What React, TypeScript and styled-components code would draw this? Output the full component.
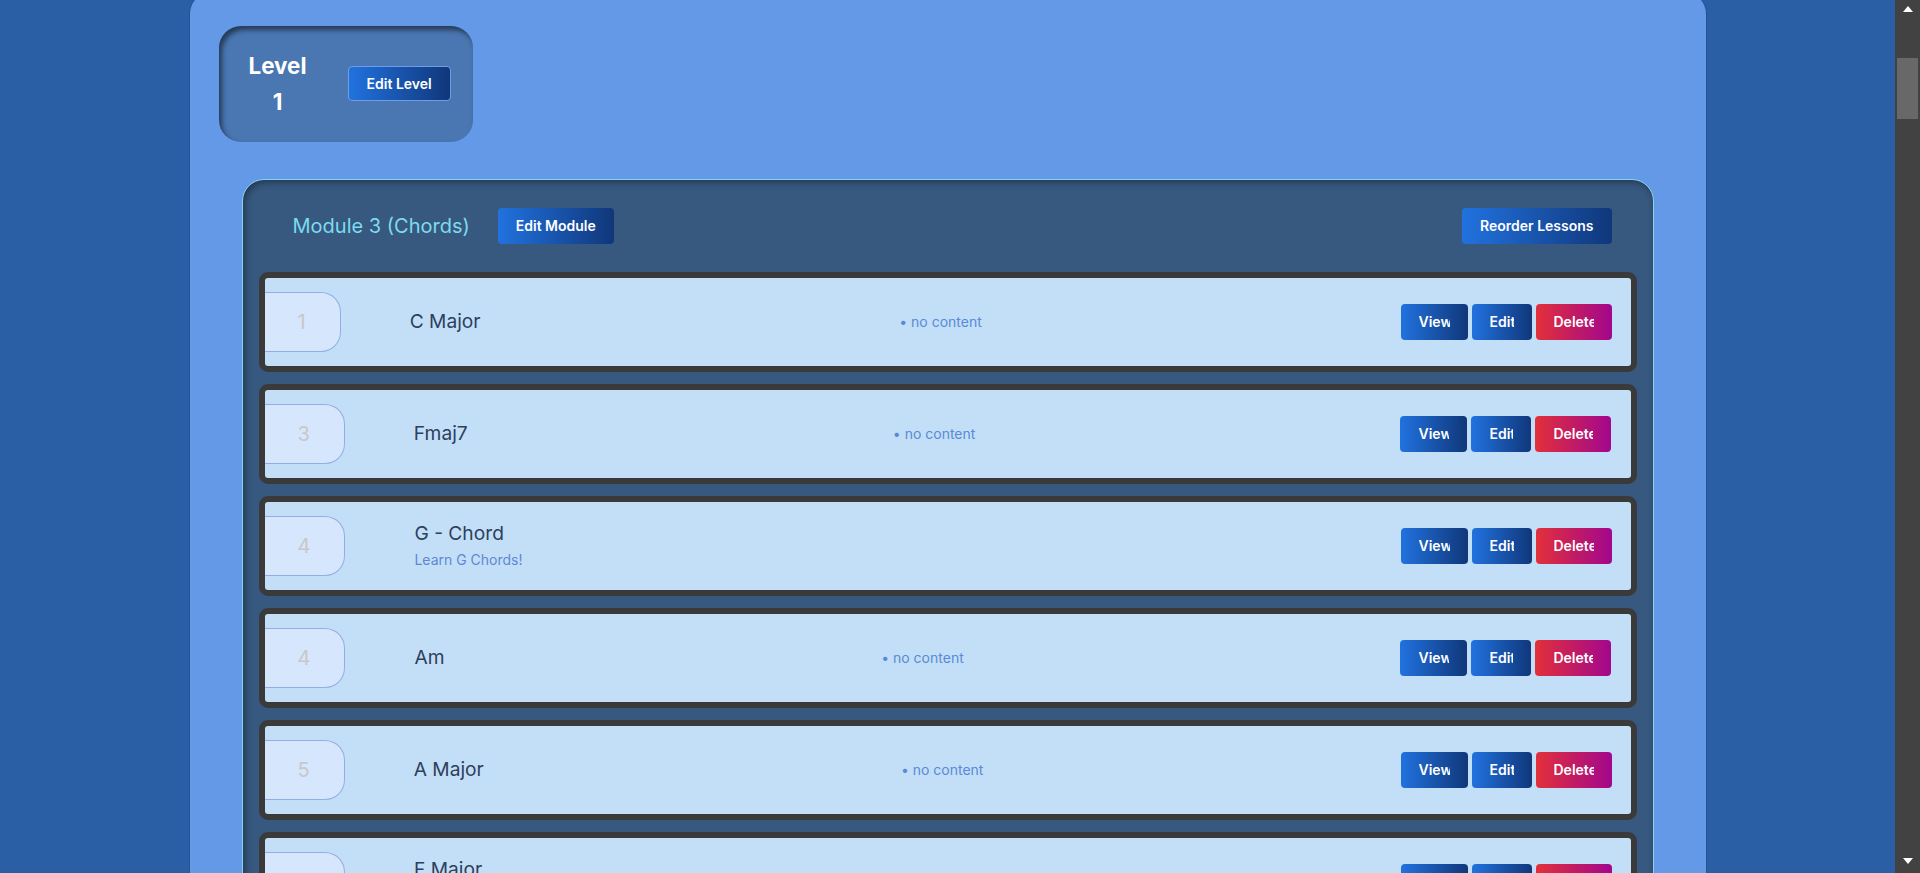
import React from 'react';
import styled, { createGlobalStyle } from 'styled-components';

const GlobalStyle = createGlobalStyle`
  html, body { margin: 0; padding: 0; overflow: hidden; }
  html, body { background: #2a5fa6; font-family: Inter, "Noto Sans", sans-serif; }
  *, *::before, *::after { box-sizing: border-box; }
`;

const Shell = styled.div`
  display: flex;
  height: 100vh;
`;

const Viewport = styled.div`
  flex: 1;
  min-width: 0;
  height: 100vh;
  overflow-y: auto;
  background: #2a5fa6;
`;

const ScrollTrack = styled.div`
  display: flex;
  flex-direction: column;
  width: 25px;
  flex-shrink: 0;
  background: #424242;
`;

const ScrollArrow = styled.div<{ $down?: boolean }>`
  display: flex;
  justify-content: center;
  align-items: ${(p) => (p.$down ? 'flex-start' : 'center')};
  height: 17px;
  padding-top: ${(p) => (p.$down ? 2 : 0)}px;

  &::before {
    content: '';
    width: 0;
    height: 0;
    border-left: 5.5px solid transparent;
    border-right: 5.5px solid transparent;
    ${(p) => (p.$down ? 'border-top: 6px solid #fff;' : 'border-bottom: 6px solid #fff;')}
  }
`;

const ScrollRail = styled.div`
  flex: 1;
  padding: 41px 2px 0;
`;

const ScrollThumb = styled.div`
  height: 61px;
  background: #686868;
`;

const Page = styled.div`
  width: 80%;
  margin: -8px auto 0;
  padding: 34px 29px 60px;
  background: #6399e6;
  border-radius: 22px;
  box-shadow: 0 0 0 1px rgba(30, 70, 130, 0.45);
`;

const LevelBar = styled.div`
  display: flex;
`;

const LevelCard = styled.div`
  display: inline-flex;
  align-items: center;
  gap: 33px;
  padding: 22px;
  background: #4a76b1;
  border-radius: 22px;
  box-shadow: inset 3px 4px 5px rgba(0, 0, 0, 0.5);
`;

const LevelTitle = styled.h2`
  margin: 0;
  width: min-content;
  padding: 0 8px;
  font-size: 22.4px;
  font-weight: 700;
  line-height: 1.6;
  text-align: center;
  color: #fff;
`;

const Button = styled.button<{ $danger?: boolean; $bordered?: boolean; $width?: number }>`
  display: inline-flex;
  align-items: center;
  justify-content: center;
  height: ${(p) => (p.$bordered ? 35 : 36)}px;
  width: ${(p) => (p.$width ? `${p.$width}px` : 'auto')};
  padding: 0 18px;
  border: ${(p) => (p.$bordered ? '1px solid #6e9ce6' : '0')};
  border-radius: 4px;
  font-family: Inter, "Noto Sans", sans-serif;
  font-size: 14px;
  font-weight: 600;
  color: #fff;
  cursor: pointer;
  flex-shrink: 0;
  background: ${(p) =>
    p.$danger
      ? 'linear-gradient(to right, #e2303a, #a2078d)'
      : 'linear-gradient(to right, #2172df, #10377a)'};
`;

const ButtonLabel = styled.span`
  display: block;
  overflow: hidden;
  white-space: nowrap;
  width: 100%;
  text-align: left;
`;

const ModuleCard = styled.section`
  margin: 37px 23px 0;
  padding: 28px 16px;
  background: #37587f;
  border: 1px solid #86d3ec;
  border-radius: 22px;
  box-shadow: inset 2px 2px 7px rgba(0, 0, 0, 0.4);
`;

const ModuleHeader = styled.div`
  display: flex;
  align-items: center;
  height: 36px;
  padding: 0 25px 0 34px;
  margin-bottom: 28px;
`;

const ModuleTitle = styled.h3`
  margin: 0 28px 0 0;
  font-size: 20px;
  font-weight: 400;
  color: #7ddbef;
`;

const HeaderSpacer = styled.div`
  flex: 1;
`;

const LessonList = styled.div`
  display: flex;
  flex-direction: column;
  gap: 12px;
`;

const LessonRow = styled.div`
  display: flex;
  align-items: center;
  justify-content: space-between;
  height: 100px;
  padding-right: 19px;
  background: #c3dff8;
  border: 6px solid #3a3a3a;
  border-radius: 9px;
  overflow: hidden;
`;

const LeftGroup = styled.div`
  display: flex;
  align-items: center;
  gap: 69px;
`;

const NumberBadge = styled.div`
  display: flex;
  align-items: center;
  height: 60px;
  margin-left: -1px;
  padding: 0 34px;
  background: #d6e6fd;
  border: 1px solid #8fb0e6;
  border-left: none;
  border-radius: 0 20px 20px 0;
  font-size: 20px;
  color: #c8c8c8;
`;

const TitleBlock = styled.div`
  display: flex;
  flex-direction: column;
`;

const LessonTitle = styled.div`
  font-size: 19.2px;
  line-height: 1.3;
  color: #2d405c;
`;

const LessonDesc = styled.div`
  margin-top: 4px;
  font-size: 14px;
  line-height: 1.4;
  color: #5f88d4;
`;

const Meta = styled.div`
  font-size: 14px;
  color: #5a8ad6;
`;

const Actions = styled.div`
  display: flex;
  gap: 4px;
`;

type Lesson = { num: number; title: string; desc?: string };

const lessons: Lesson[] = [
  { num: 1, title: 'C Major' },
  { num: 3, title: 'Fmaj7' },
  { num: 4, title: 'G - Chord', desc: 'Learn G Chords!' },
  { num: 4, title: 'Am' },
  { num: 5, title: 'A Major' },
  { num: 6, title: 'F Major', desc: 'Learn F Chords!' },
  { num: 7, title: 'D Major' },
  { num: 8, title: 'Em' },
  { num: 9, title: 'E Major' },
  { num: 10, title: 'Dm' },
];

export default function App() {
  return (
    <>
      <GlobalStyle />
      <Shell>
        <Viewport>
          <Page>
            <LevelBar>
              <LevelCard>
                <LevelTitle>Level 1</LevelTitle>
                <Button $bordered>Edit Level</Button>
              </LevelCard>
            </LevelBar>
            <ModuleCard>
              <ModuleHeader>
                <ModuleTitle>Module 3 (Chords)</ModuleTitle>
                <Button>Edit Module</Button>
                <HeaderSpacer />
                <Button>Reorder Lessons</Button>
              </ModuleHeader>
              <LessonList>
                {lessons.map((l, i) => (
                  <LessonRow key={i}>
                    <LeftGroup>
                      <NumberBadge>{l.num}</NumberBadge>
                      <TitleBlock>
                        <LessonTitle>{l.title}</LessonTitle>
                        {l.desc && <LessonDesc>{l.desc}</LessonDesc>}
                      </TitleBlock>
                    </LeftGroup>
                    {!l.desc && <Meta>• no content</Meta>}
                    <Actions>
                      <Button $width={67}>
                        <ButtonLabel>View</ButtonLabel>
                      </Button>
                      <Button $width={60}>
                        <ButtonLabel>Edit</ButtonLabel>
                      </Button>
                      <Button $danger $width={76}>
                        <ButtonLabel>Delete</ButtonLabel>
                      </Button>
                    </Actions>
                  </LessonRow>
                ))}
              </LessonList>
            </ModuleCard>
          </Page>
        </Viewport>
        <ScrollTrack aria-hidden>
          <ScrollArrow />
          <ScrollRail>
            <ScrollThumb />
          </ScrollRail>
          <ScrollArrow $down />
        </ScrollTrack>
      </Shell>
    </>
  );
}
